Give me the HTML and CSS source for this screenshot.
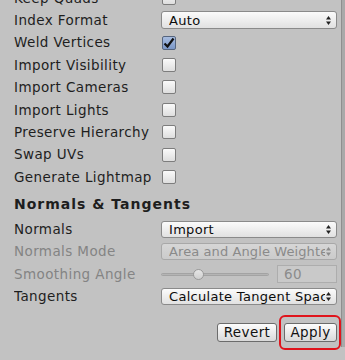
FILE: index.html
```html
<!DOCTYPE html>
<html lang="en">
<head>
    <meta charset="UTF-8">
    <title>Model Import Settings</title>
    <link rel="stylesheet" href="styles.css">
</head>
<body>
    <svg width="0" height="0" class="defs">
        <symbol id="arrows" viewBox="0 0 5 9">
            <polygon points="2.5,0 5,3.5 0,3.5"></polygon>
            <polygon points="0,5.5 5,5.5 2.5,9"></polygon>
        </symbol>
        <symbol id="tick" viewBox="0 0 12 12">
            <path d="M1.5 6.5 L4.5 9.5 L10.5 1.5" fill="none" stroke="#111" stroke-width="2.2"/>
        </symbol>
    </svg>
    <div class="panel">
        <div class="grid">
            <div class="label">Keep Quads</div>
            <div class="ctl"><span class="check"></span></div>

            <div class="label">Index Format</div>
            <div class="ctl">
                <div class="popup"><span class="popup__text">Auto</span><svg class="popup__arr"><use href="#arrows"></use></svg></div>
            </div>

            <div class="label">Weld Vertices</div>
            <div class="ctl"><span class="check check--on"><svg><use href="#tick"></use></svg></span></div>

            <div class="label">Import Visibility</div>
            <div class="ctl"><span class="check"></span></div>

            <div class="label">Import Cameras</div>
            <div class="ctl"><span class="check"></span></div>

            <div class="label">Import Lights</div>
            <div class="ctl"><span class="check"></span></div>

            <div class="label">Preserve Hierarchy</div>
            <div class="ctl"><span class="check"></span></div>

            <div class="label">Swap UVs</div>
            <div class="ctl"><span class="check"></span></div>

            <div class="label">Generate Lightmap UVs</div>
            <div class="ctl"><span class="check"></span></div>

            <div class="head">Normals &amp; Tangents</div>

            <div class="label">Normals</div>
            <div class="ctl">
                <div class="popup"><span class="popup__text">Import</span><svg class="popup__arr"><use href="#arrows"></use></svg></div>
            </div>

            <div class="label label--off">Normals Mode</div>
            <div class="ctl">
                <div class="popup popup--off"><span class="popup__text">Area and Angle Weighted</span><svg class="popup__arr"><use href="#arrows"></use></svg></div>
            </div>

            <div class="label label--off">Smoothing Angle</div>
            <div class="ctl slider">
                <div class="slider__track"><span class="slider__thumb"></span></div>
                <div class="num">60</div>
            </div>

            <div class="label">Tangents</div>
            <div class="ctl">
                <div class="popup"><span class="popup__text">Calculate Tangent Space</span><svg class="popup__arr"><use href="#arrows"></use></svg></div>
            </div>
        </div>
        <div class="actions">
            <button class="btn">Revert</button>
            <span class="mark"><button class="btn btn--apply">Apply</button></span>
        </div>
    </div>
</body>
</html>
```

FILE: styles.css
```css
html, body {
    margin: 0;
    height: 100%;
}

body {
    overflow: hidden;
    background: #c2c2c2;
    color: #1e1e1e;
    font: 13.5px "DejaVu Sans", Verdana, sans-serif;
    letter-spacing: .4px;
}

.defs {
    position: absolute;
}

.panel {
    height: 100%;
    box-sizing: border-box;
    margin-top: -13.4px;
    padding-left: 14px;
    border-right: 3px solid #a9a9a9;
    box-shadow: inset -1px 0 0 #8f8f8f;
}

.grid {
    display: grid;
    grid-template-columns: 147px 176px;
    grid-auto-rows: minmax(22.4px, auto);
    align-items: center;
}

.label {
    max-width: 137px;
    overflow: hidden;
    white-space: nowrap;
    line-height: 22.4px;
}

.label--off {
    color: #848484;
}

.head {
    grid-column: 1 / 3;
    height: 29.8px;
    padding-top: 5px;
    box-sizing: border-box;
    line-height: 22.4px;
    font-size: 14px;
    font-weight: bold;
    letter-spacing: 1px;
}

.ctl {
    display: flex;
    align-items: center;
    height: 22.4px;
}

.check {
    display: inline-block;
    box-sizing: border-box;
    width: 14px;
    height: 14px;
    margin-left: 1px;
    border: 1px solid #7d7d7d;
    border-radius: 2px;
    background: linear-gradient(#fafafa, #dedede);
}

.check--on {
    border-color: #56657e;
    background: linear-gradient(#a8bde0, #7b97c7);
}

.check svg {
    display: block;
    width: 12px;
    height: 12px;
}

.popup {
    display: flex;
    align-items: center;
    box-sizing: border-box;
    width: 176px;
    height: 17.5px;
    padding: 0 5px 0 7px;
    border: 1px solid #8a8a8a;
    border-radius: 3px;
    background: linear-gradient(#fbfbfb, #e1e1e1);
    color: #0c0c0c;
}

.popup__text {
    flex: 1;
    overflow: hidden;
    white-space: nowrap;
    font-size: 13px;
    letter-spacing: .3px;
}

.popup__arr {
    width: 5px;
    height: 9px;
    margin-left: 1px;
    fill: #222;
}

.popup--off {
    border-color: #a8a8a8;
    background: linear-gradient(#d6d6d6, #cbcbcb);
    color: #8a8a8a;
}

.popup--off .popup__text {
    letter-spacing: .1px;
}

.popup--off .popup__arr {
    fill: #8d8d8d;
}

.slider {
    justify-content: space-between;
}

.slider__track {
    position: relative;
    width: 108px;
    height: 3px;
    border: 1px solid #a3a3a3;
    border-radius: 2px;
    box-sizing: border-box;
    background: #b4b4b4;
}

.slider__thumb {
    position: absolute;
    left: 31px;
    top: -5px;
    box-sizing: border-box;
    width: 11px;
    height: 11px;
    border: 1px solid #9a9a9a;
    border-radius: 50%;
    background: linear-gradient(#e6e6e6, #cfcfcf);
}

.num {
    box-sizing: border-box;
    width: 60px;
    height: 18px;
    padding-left: 6px;
    border: 1px solid #adadad;
    background: #c9c9c9;
    color: #8c8c8c;
    line-height: 16px;
}

.actions {
    display: flex;
    justify-content: flex-end;
    align-items: center;
    gap: 2px;
    width: 327px;
    margin-top: 7.6px;
}

.btn {
    box-sizing: border-box;
    width: 60px;
    height: 19px;
    padding: 0;
    border: 1px solid #6c6c6c;
    border-radius: 3px;
    background: linear-gradient(#fdfdfd, #d9d9d9);
    color: #111;
    font: 13.5px "DejaVu Sans", Verdana, sans-serif;
    letter-spacing: .4px;
    line-height: 17px;
}

.btn--apply {
    width: 53px;
}

.mark {
    display: flex;
    padding: 6px 2px 6px 3px;
    border: 2px solid #e0141c;
    border-radius: 6px;
}
```
